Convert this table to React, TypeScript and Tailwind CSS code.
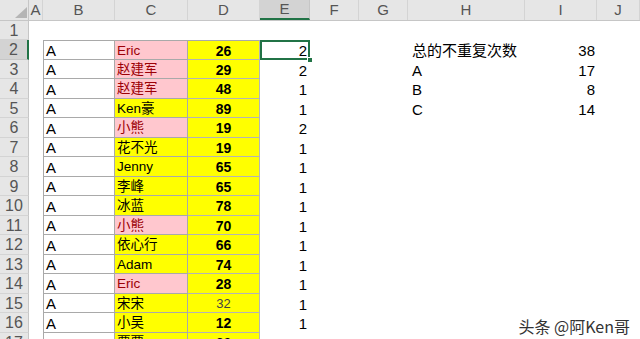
import React from "react";

const COLS = "grid grid-cols-[29px_14px_72px_73px_72px_50px_49px_49px_117px_72px_43px] overflow-hidden";
const FONT = { fontFamily: '"Liberation Sans", Arial, "Noto Sans CJK SC", sans-serif' };

type Row = {
  n: number;
  b?: string;
  c?: string;
  pink?: boolean;
  d?: string;
  light?: boolean;
  e?: string;
  h?: string;
  i?: string;
};

const rows: Row[] = [
  { n: 1 },
  { n: 2, b: "A", c: "Eric", pink: true, d: "26", e: "2", h: "总的不重复次数", i: "38" },
  { n: 3, b: "A", c: "赵建军", pink: true, d: "29", e: "2", h: "A", i: "17" },
  { n: 4, b: "A", c: "赵建军", pink: true, d: "48", e: "1", h: "B", i: "8" },
  { n: 5, b: "A", c: "Ken豪", d: "89", e: "1", h: "C", i: "14" },
  { n: 6, b: "A", c: "小熊", pink: true, d: "19", e: "2" },
  { n: 7, b: "A", c: "花不光", d: "19", e: "1" },
  { n: 8, b: "A", c: "Jenny", d: "65", e: "1" },
  { n: 9, b: "A", c: "李峰", d: "65", e: "1" },
  { n: 10, b: "A", c: "冰蓝", d: "78", e: "1" },
  { n: 11, b: "A", c: "小熊", pink: true, d: "70", e: "1" },
  { n: 12, b: "A", c: "依心行", d: "66", e: "1" },
  { n: 13, b: "A", c: "Adam", d: "74", e: "1" },
  { n: 14, b: "A", c: "Eric", pink: true, d: "28", e: "1" },
  { n: 15, b: "A", c: "宋宋", d: "32", light: true, e: "1" },
  { n: 16, b: "A", c: "小吴", d: "12", e: "1" },
  { n: 17, b: "", c: "覃覃", d: "60" },
];

const letters = ["A", "B", "C", "D", "E", "F", "G", "H", "I", "J"];

export default function App() {
  return (
    <div className="relative w-[640px] h-[339px] overflow-hidden bg-white leading-[16px]" style={FONT}>
      {/* column header */}
      <div className={`${COLS} h-[21px] bg-[#e6e6e6] border-b border-[#c6c6c6]`}>
        <div className="relative border-r border-[#c6c6c6]">
          <svg className="absolute left-[15px] top-[7px]" width="12" height="11" viewBox="0 0 12 11">
            <polygon points="12,0 12,11 0,11" fill="#b5b5b5" />
          </svg>
        </div>
        {letters.map((l) => (
          <div
            key={l}
            className={
              l === "E"
                ? "flex items-center justify-center bg-[#d3d3d3] border-r border-[#c6c6c6] border-b-2 border-b-[#217346] text-[15px] text-[#555]"
                : "flex items-center justify-center border-r border-[#d4d4d4] text-[15px] text-[#555]"
            }
          >
            {l}
          </div>
        ))}
      </div>
      {rows.map((r) => {
        const h = r.n % 2 === 0 ? "h-[20px]" : "h-[19px]";
        const inTable = r.n >= 2;
        const sel = r.n === 2;
        return (
          <div key={r.n} className={`${COLS} ${h}`}>
            <div
              className={
                sel
                  ? "flex items-center justify-center pt-[1px] bg-[#d3d3d3] border-b border-[#c6c6c6] border-r-2 border-r-[#217346] text-[16px] text-[#555]"
                  : "flex items-center justify-center pt-[1px] bg-[#e6e6e6] border-b border-[#d4d4d4] border-r border-r-[#c6c6c6] text-[16px] text-[#555]"
              }
            >
              {r.n}
            </div>
            <div />
            {inTable ? (
              <div
                className={`flex items-center pl-[2px] pt-[2px] bg-white border-l border-r border-b border-[#a9a9a9] ${
                  r.n === 2 ? "border-t" : ""
                } text-[15px] text-black`}
              >
                {r.b}
              </div>
            ) : (
              <div />
            )}
            {inTable ? (
              <div
                className={`flex items-center pl-[2px] pt-[1px] border-r border-b border-[#a9a9a9] ${
                  r.n === 2 ? "border-t" : ""
                } text-[13.5px] ${r.pink ? "bg-[#ffc7ce] text-[#9c0006]" : "bg-[#ffff00] text-black"}`}
              >
                {r.c}
              </div>
            ) : (
              <div />
            )}
            {inTable ? (
              <div
                className={`flex items-center justify-center pt-[1px] bg-[#ffff00] border-r border-b border-[#b4b4b4] ${
                  r.n === 2 ? "border-t border-t-[#a9a9a9]" : ""
                } ${r.light ? "text-[13px] text-[#444] font-normal" : "text-[14px] text-black font-bold"}`}
              >
                {r.d}
              </div>
            ) : (
              <div />
            )}
            <div className="relative flex items-center justify-end pr-[3px] pt-[2px] text-[15px] text-black">
              {sel && (
                <div className="absolute inset-0 border-2 border-[#217346]" />
              )}
              {r.e}
            </div>
            <div />
            <div />
            <div className="flex items-center pl-[4px] pt-[2px] text-[15px] text-black whitespace-nowrap">{r.h}</div>
            <div className="flex items-center justify-end pr-[2px] pt-[2px] text-[15px] text-black">{r.i}</div>
            <div />
          </div>
        );
      })}
      <div className="absolute left-[307px] top-[57px] w-[6px] h-[6px] bg-[#217346] border border-white" />
      <div
        className="absolute right-[10px] bottom-[5px] text-[16px] text-[#333] whitespace-nowrap"
        style={{ textShadow: "0 0 2px #fff, 0 0 2px #fff", fontFamily: '"Noto Sans CJK SC", "Liberation Sans", sans-serif' }}
      >
        头条 @阿Ken哥
      </div>
    </div>
  );
}
